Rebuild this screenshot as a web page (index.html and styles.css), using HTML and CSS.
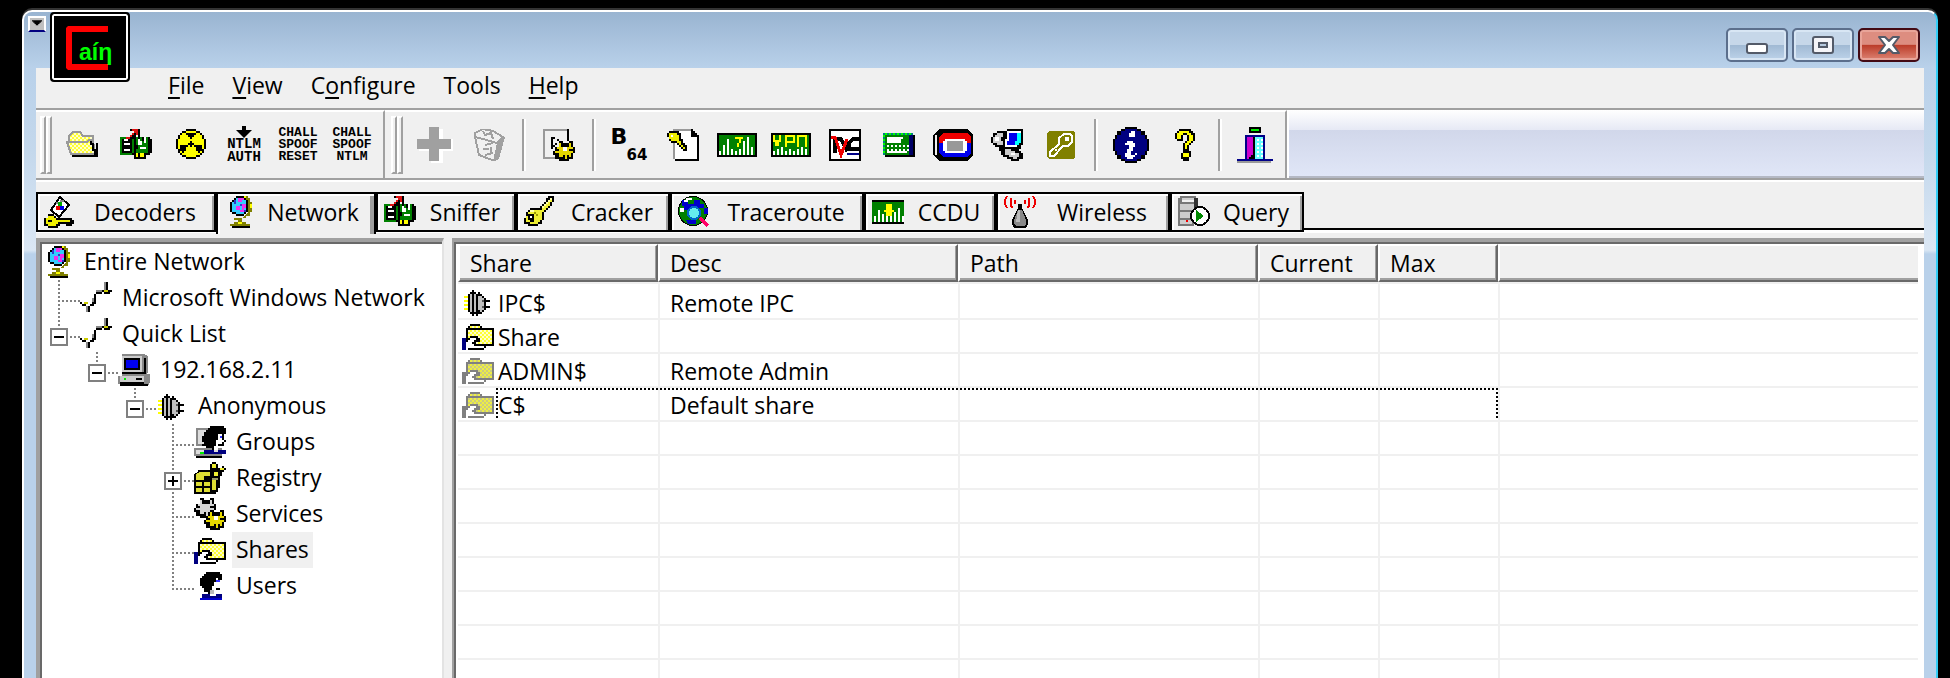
FILE: index.html
```html
<!DOCTYPE html>
<html lang="en">
<head>
<meta charset="utf-8">
<title>Cain</title>
<link rel="stylesheet" href="styles.css">
</head>
<body>
<svg class="sprite" width="0" height="0" aria-hidden="true">
  <defs>
    <pattern id="dither" width="2" height="2" patternUnits="userSpaceOnUse"><path fill="#ff3" d="M0 0h2v2H0z"/><path fill="#ffc" d="M0 0h1v1H0zM1 1h1v1H1z"/></pattern>
    <pattern id="dither-dim" width="2" height="2" patternUnits="userSpaceOnUse"><path fill="#ee4" d="M0 0h2v2H0z"/><path fill="#cccc80" d="M0 0h1v1H0zM1 1h1v1H1z"/></pattern>
    <pattern id="dither-cyan" width="2" height="2" patternUnits="userSpaceOnUse"><path fill="#6ff" d="M0 0h2v2H0z"/><path fill="#fff" d="M0 0h1v1H0z"/></pattern>
    <path id="gear-rim" d="M8 6h2v1h3V6h2v3h1v3h-1v3h-2v1H8v-1H6v-2H5v-2h1V9h2z"/>
    <path id="gear-teeth" d="M8 7h1v2h4V7h1v2h1v1h-2v1h2v1h-1v2h-1v-1h-1v2h-1v-2h-1v1H8v-2H6v-1h2v-1H7V9h1z"/>
  </defs>
  <symbol id="i-open" viewBox="0 0 16 16">
    <path fill="#000" d="M3 13h13v1H3zM15 7h1v7h-1z"/>
    <path fill="url(#dither)" stroke="#999" d="M1.500 6V3.500L3.500 1.500H7L8.500 3.500H13.500V6"/>
    <path fill="url(#dither)" stroke="#999" d="M.5 6.500H10.500L11.500 5.500H13.500L14.500 12.500H2.500z"/>
    <path fill="#000" d="M12 6h1v1h1v3h1v3h-1v-2h-1V8h-1z"/>
  </symbol>
  <symbol id="i-chip" viewBox="0 0 16 16">
    <path fill="#000" d="M1 4h14v1h1v7h-1v1h-2v2H7v-2H0V4z"/>
    <path fill="#008000" d="M0 4h1v9H0zM1 4h4v1H1zM1 12h5v1H1zM6 5h1v7H6zM8 4h6v8H8z"/>
    <path fill="#fff" d="M2 5h3v1H2zM2 7h3v1H2zM2 10h3v1H2zM9 5h1v1h1v2H9zM12 4h1v3h-1zM10 9h3v1h-3z"/>
    <path fill="#000" d="M11 4h1v2h-1zM8 8h1v2H8z"/>
    <path fill="#ff0" d="M8 12h1v2H8zM10 12h2v2h-2z"/>
    <path fill="#000" d="M5 0h5v5H9V3H8v1H7v1H6v1H4V4h1V3h1V2h1V1H5z"/>
    <path fill="#d11" d="M6 0h3v3H8V2H7v1H6v1H5v1H3V4h2V3h1V2h1V1H6z"/>
  </symbol>
  <symbol id="i-rad" viewBox="-1 0 16 16">
    <path fill="#000" d="M5 0h5v1h2v1h1v1h1v2h1v5h-1v2h-1v1h-1v1h-2v1H5v-1H3v-1H2v-1H1v-2H0V5h1V3h1V2h1V1h2z"/>
    <path fill="#ff0" d="M5 1h5v1h2v1h1v2h1v5h-1v2h-1v1h-2v1H5v-1H3v-1H2v-2H1V5h1V3h1V2h2z"/>
    <path fill="#000" d="M5 2h5v1H9v1H8v1H7V4H6V3H5zM7 6h1v1h1v1H8v1H7V8H6V7h1zM2 8h4v1H5v2H4v1H3v-1H2zM9 8h4v3h-1v1h-1v-1h-1V9H9z"/>
  </symbol>
  <symbol id="i-arrow" viewBox="0 0 8 6"><path d="M3 0h2v2h3L4 6 0 2h3z"/></symbol>
  <symbol id="i-plus" viewBox="0 0 18 18">
    <path fill="#fff" d="M7 1h6v5h5v6h-5v6H7v-6H1V7h6z"/><path fill="#a0a0a0" d="M6 0h5v6h6v5h-6v6H6v-6H0V6h6z"/>
  </symbol>
  <symbol id="i-bin" viewBox="0 0 16 16">
    <path fill="#a0a0a0" d="M16 4l-3 11-3 1 2-9z"/>
    <path fill="none" stroke="#a0a0a0" d="M1 2l4-2 5 1 5 3-3 3-7-2-4-1zM1 4l2 9 8 3 2-9M5 1l1 2 3-1 1 3M6 8l4-1M5 10h3M6 13l4-1M9 9v3"/>
  </symbol>
  <symbol id="i-conf" viewBox="0 0 16 16">
    <path fill="none" stroke="#999" d="M.5 15V.5H12M0 14.500h6"/>
    <path fill="#000" d="M12 0h1v6h-1zM4 4h2v1H5v3h1v1H5v1H4zM7 5h1v1H7zM6 7h1v1H6z"/>
    <use href="#gear-rim" fill="#000"/><use href="#gear-teeth" fill="#e6d800"/><path fill="#fff" d="M10 9h2v2h-2z"/>
  </symbol>
  <symbol id="i-keydoc" viewBox="0 0 16 16">
    <path fill="#fff" d="M4 1h8l3 3v11H4z"/><path fill="none" stroke="#999" d="M3.500 15V.5H12"/>
    <path fill="#000" d="M12 0h1v1h1v1h1v1h1v13H4v-1h11V4h-3z"/>
    <path fill="#000" d="M1 1h5v1h1v3h1v2h1v1h1v3H8v-1H7V9H6V8H5V7H2V6H1V4H0V2h1z"/>
    <path fill="#ee0" d="M1 2h4v1h1v3h1v2h1v1h1v1H8V9H7V8H6V7H5V6H2V5H1z"/><path fill="#fff" d="M2 3h1v1H2z"/>
  </symbol>
  <symbol id="i-sig7" viewBox="0 0 20 12">
    <path fill="#000" d="M0 0h20v12H0z"/><path fill="#008000" d="M1 1h18v10H1z"/>
    <path stroke="#fff" d="M1.500 9v2M3.500 6v5M5.500 3v8M7.500 8v3M9.500 9v2M11.500 8v3M13.500 4v7M15.500 2v9M17.500 7v4"/>
    <path fill="#ff0" d="M9 2h4v1h-1v2h-1v2h-1V5h1V3H9z"/>
  </symbol>
  <symbol id="i-sigvpn" viewBox="0 0 20 12">
    <path fill="#000" d="M0 0h20v12H0z"/><path fill="#008000" d="M1 1h18v10H1z"/>
    <path stroke="#fff" d="M1.500 9v2M3.500 8v3M5.500 7v4M7.500 9v2M9.500 8v3M11.500 9v2M13.500 8v3M15.500 7v4M17.500 8v3"/>
    <path fill="none" stroke="#ff0" d="M1.500 1v3h1v2h1v-2h1V1M7.500 7V1.500H11.500V4.500H8M13.500 7V1.500H17.500V7"/>
  </symbol>
  <symbol id="i-rdp" viewBox="0 0 16 16">
    <path fill="#fff" stroke="#000" d="M.5 .5h15v15H.5z"/>
    <path fill="none" stroke="#000" stroke-width="2" d="M3 12V5h3l3 6V6M15 5h-3l-2 2v3h5"/>
    <path fill="none" stroke="#e00" stroke-width="1.500" d="M1 4h2l3 9 3-8"/>
    <path fill="#008" d="M9 12h6v1H9z"/>
  </symbol>
  <symbol id="i-card" viewBox="0 0 16 16">
    <path fill="#008080" d="M0 2h15v11H0z"/><path fill="#008000" d="M1 3h13v10H1z"/>
    <path fill="#000" d="M15 3h1v11H1v-1h14z"/><path fill="#006" d="M13 3h2v10h-2z"/>
    <path fill="#fff" d="M2 4h8v1H9v2H2z"/><path stroke="#fff" stroke-dasharray="1 1" d="M2 8.500h11M2 10.500h11"/><path fill="#fff" d="M2 11h10v1H2z"/>
    <path stroke="#0f0" stroke-dasharray="1 1" d="M1 2.500h13M.5 3v10"/>
  </symbol>
  <symbol id="i-oval" viewBox="0 0 20 16">
    <path fill="#000" d="M3 0h14l3 3v10l-3 3H3l-3-3V3z"/><path fill="#eee" d="M1 3h1v10H1z"/>
    <path fill="#e00" d="M5 2h12l2 2v3H3V4z"/><path fill="#00e" d="M3 7h16v5l-2 2H5l-2-2z"/>
    <path fill="#fff" d="M6 5h10v1h1v5h-1v1H6v-1H5V6h1z"/><path fill="#999" d="M7 6h8v5H7z"/>
  </symbol>
  <symbol id="i-phone" viewBox="0 0 16 16">
    <path fill="#000" d="M3 1h5V0h8v8h-1v2h-1v1h1v1h1v3h-2v1h-4v-1H8v-1H6v-1H5v-2H4V9H2V8H1V7H0V4h1V2h2z"/>
    <path fill="#ccc" d="M3 2h3v2H5v2h1v2H3V7H1V4h1V3h1zM7 10h3v1h2v1h2v2h-1v1h-2v-1H9v-1H7z"/>
    <path fill="#fff" d="M2 4h2v2H2zM8 1h7v1H9v6h4v1H7V5h1zM10 12h2v1h-2z"/>
    <path fill="#00e" d="M9 2h4v6H8V6h1z"/><path fill="#0ff" d="M13 2h2v5h-1v1h-2V6h1z"/>
  </symbol>
  <symbol id="i-pass" viewBox="0 0 14 14">
    <path fill="#808000" d="M1 0h12l1 1v12l-1 1H1l-1-1V1z"/>
    <path fill="none" stroke="#fff" d="M8.500 1.500h3l1 1v3l-2 2H8L3.500 12.500h-2v-2L6 6.500v-3z"/><path fill="#fff" d="M9 3h2v2H9zM4 9h1v1H4z"/>
  </symbol>
  <symbol id="i-info" viewBox="0 0 18 18">
    <path fill="#000" d="M6 0h6v1h2v1h2v2h1v2h1v6h-1v2h-1v2h-2v1h-2v1H6v-1H4v-1H2v-2H1v-2H0V6h1V4h1V2h2V1h2z"/>
    <path fill="#000080" d="M6 1h6v1h2v2h2v2h1v6h-1v2h-2v2h-2v1H6v-1H4v-2H2v-2H1V6h1V4h2V2h2z"/>
    <path fill="#fff" d="M9 2h2v3H8V3h1zM6 8h1V7h3v1h1v2h-1v2H9v2h2v-1h1v1h-1v1h-1v1H7v-1H6v-2h1v-2h1V9H6z"/>
  </symbol>
  <symbol id="i-help" viewBox="0 0 10 16">
    <path fill="#000" d="M2 0h6v1h1v1h1v4H9v1H8v1H7v3h1v3H7v2H4v-1H3v-3h1V7h1V6h1V3H4v3H1V5H0V2h1V1h1z"/>
    <path fill="#ff0" d="M2 1h5v1h1v1h1v3H8v1H7v1H6v2H5V7h1V6h1V3H6V2H4v1H3v2H1V2h1zM4 12h3v2H4z"/>
  </symbol>
  <symbol id="i-exit" viewBox="0 0 18 18">
    <path fill="#000" d="M6 0h6v3H6z"/><path fill="#0e0" d="M7 1h4v1H7z"/>
    <path fill="#008" d="M4 4h10v12h4v1H0v-1h4z"/><path fill="#c0c" d="M5 5h3v9H7v1H6v1H5z"/><path fill="#000" d="M8 5h1v11H6v-1h1v-1h1z"/>
    <path fill="url(#dither-cyan)" d="M9 5h4v11H9z"/><path fill="#999" d="M0 17h17v1H0z"/>
  </symbol>
  <symbol id="i-decode" viewBox="0 0 16 16">
    <path fill="#fff" stroke="#000" d="M8 .5l4.500 4-5 6L3.500 7z"/><path fill="#888" d="M6 3h1v1H6zM8 2h2v1H8z"/><path fill="#0a0" d="M7 3h2v2H7z"/><path fill="#e00" d="M6 5h2v2H6z"/><path fill="#00e" d="M8 5h2v2H8z"/>
    <path fill="#000" d="M2 9h3v1h1v1h8v1h1v2h-1v1h-3v-1H8v1H7v1H2v-1H0v-4h2z"/>
    <path fill="#ee0" d="M2 10h3v1h1v1h7v1h-6v1H6v1H2v-1H1v-3h1z"/><path fill="#000" d="M2 12h2v1H2z"/>
  </symbol>
  <symbol id="i-globe" viewBox="-1 0 16 16">
    <path fill="#808000" d="M9 0h2v1h1v2h1v5h-1v2h-2v1H8v2h2v1h2v1H2v-1h2v-1h2v-1H4v-1h4l3-3V3z"/><path fill="#000" d="M3 15h9v1H3z"/>
    <path fill="#ff0" d="M9 0h1v1H9zM12 4h1v2h-1zM6 13h2v1H6z"/>
    <path fill="#000" d="M5 0h4v1h1v1h1v6h-1v1H9v1H5V9H3V8H2V3h1V2h1V1h1z"/>
    <path fill="#3cf" d="M5 1h4v1h1v6H9v1H5V8H3V3h1V2h1z"/>
    <path fill="#e3e" d="M6 1h3v1H8v1H6zM8 4h2v2H9v1H8zM5 5h2v2H5zM7 7h2v1H7z"/><path fill="#33c" d="M4 2h1v2H4zM7 4h1v1H7zM9 7h1v1H9z"/>
  </symbol>
  <symbol id="i-key" viewBox="0 0 16 16">
    <path fill="#000" d="M12 0h3v3h-1v2h-1v1h-1v1h-1v1h-1v4H9v2H7v1H2v-1H0v-3h1V8h1V7h1V6h5V5h1V4h1V3h1V1h1z"/>
    <path fill="#ee3" d="M13 1h1v2h-1v2h-1v1h-1v1h-1v1H9v4H8v1H7v1H3v-1H1v-3h1V8h1V7h6V5h1V4h1V3h1V2h1z"/>
    <path fill="#ffa" d="M13 1h1v1h-1v1h-1v1h-1v1h-1v1H9V5h1V4h1V3h1V2h1zM3 7h2v1H3z"/>
    <path fill="#000" d="M2 9h3v4H3v-1H2z"/><path fill="#fff" d="M3 10h1v1H3z"/><path fill="#990" d="M6 9h1v1H6zM5 8h1v1H5z"/>
  </symbol>
  <symbol id="i-trace" viewBox="0 0 16 16">
    <circle cx="7.500" cy="7.500" r="7.500" fill="#000"/><circle cx="7.500" cy="7.500" r="7" fill="#008000"/>
    <path fill="#00c" d="M2 2h3v2h3V2h3v2h2v2h-3v3H5V7H3V5H2zM4 12h5v2H5zM13 6h2v3h-2z"/><path fill="#fff" d="M4 1h3v1H5v1H3V2h1zM1 6h2v2H1z"/>
    <circle cx="8" cy="8.500" r="3" fill="#6ee" stroke="#06c"/><path stroke="#f06" stroke-width="2" d="M11 11l4 4"/>
  </symbol>
  <symbol id="i-ccdu" viewBox="0 0 16 12">
    <path fill="#000" d="M0 0h16v12H0z"/><path fill="#008000" d="M0 1h16v10H0z"/>
    <path stroke="#fff" d="M1.500 8v3M3.500 5v6M5.500 7v4M7.500 8v3M9.500 8v3M11.500 6v5M13.500 4v7M15.500 8v3"/><path fill="#ff0" d="M7 2h3v3h1v1h-1v2H7V6H6V5h1z"/>
  </symbol>
  <symbol id="i-wifi" viewBox="0 0 16 16">
    <path fill="none" stroke="#e00" d="M1.500 0L.5 2v2l1 2M3.500 1v4l1 1M12.500 1v4l-1 1M14.500 0l1 2v2l-1 2M5.500 2v2M10.500 2v2"/>
    <path fill="#000" d="M7 4h2v2l3 6v2l-1 2H5l-1-2v-2l3-6z"/><path fill="#888" d="M7 7h2l2 5v2l-1 1H6l-1-1v-2z"/><path fill="#bbb" d="M7 7h1v6H6z"/>
  </symbol>
  <symbol id="i-query" viewBox="0 0 16 16">
    <path fill="#777" d="M1 0h8v1H8v1H2v1h6v1H1v1h7v3H1v1h7v3H1v1h7v2H0V1h1z"/><path fill="#ccc" d="M2 1h6v1H2zM1 4h7v3H1zM1 8h6v3H1zM1 12h6v2H1z"/><path fill="#777" d="M1 7h7v1H1zM1 3h7v1H1zM1 11h6v1H1z"/><path fill="#333" d="M8 1h2v5H8z"/><path fill="#e00" d="M4 12h1v1H4z"/>
    <circle cx="11" cy="10" r="4.500" fill="#fff" stroke="#000"/><path fill="#080" d="M9 7l4 3-4 3z"/>
  </symbol>
  <symbol id="i-wire" viewBox="0 0 16 16">
    <path fill="#000" d="M0 10h1v1h2v1h2v-1h1v-1h1V6h1V5h3v1H8v5H7v1H5v3H4v-3H1v-1H0zM13 0h1v4h2v1h-1v1h-3V5h-1V4h2z"/>
    <path fill="#888" d="M12 0h1v4h-1zM8 4h3v1H8zM6 8h1v2H6zM3 12h1v3H3z"/><path fill="#cc0" d="M12 4h2v1h-2zM2 10h2v1H2z"/>
  </symbol>
  <symbol id="i-pc" viewBox="0 0 16 16">
    <path fill="#888" d="M2 0h11l2 1v8l-1 1h2v4l-1 2H1v-1H0v-4h2z"/><path fill="#ccc" d="M2 1h10v8H2zM1 11h12v3H1z"/><path fill="#000" d="M2 9h12v1H2zM13 2h1v7h-1zM1 14h12v1H1zM1 15h14v1H1zM9 12h3v1H9z"/>
    <path fill="#000" d="M3 2h8v6H3z"/><path fill="#00e" d="M4 3h6v4H4z"/><path fill="#0e0" d="M3 12h1v1H3z"/>
  </symbol>
  <symbol id="i-plug" viewBox="0 0 16 16">
    <path fill="#ff0" d="M1 5h2v1H1zM1 7h2v1H1zM1 9h2v1H1zM1 11h2v1H1z"/>
    <path fill="#000" d="M3 4h1V3h1V2h1v1h1v1h1V3h1v1h1v1h1v1h1v1h2v1h-2v2h2v1h-2v1h-1v1h-1v1H8v1H7v-1H6v1H5v-1H4v-1H3z"/>
    <path fill="#c0c0c0" d="M4 4h1v9H4zM6 4h1v9H6zM8 5h1v7H8zM9 5h1v8H9zM10 6h1v6h-1z"/><path fill="#555" d="M10 7h1v1h-1zM10 10h1v1h-1z"/>
  </symbol>
  <symbol id="i-groups" viewBox="0 0 16 16">
    <path fill="#888" d="M1 1h7v9H1zM0 11h14v5H1v-1H0z"/><path fill="#ddd" d="M2 2h5v7H2zM1 12h12v2H1z"/><path fill="#0e0" d="M3 13h2v1H3z"/><path fill="#000" d="M1 15h13v1H1z"/>
    <path fill="#000" d="M8 0h7v1h1v3h-1v3h1v1h-1v2h-3v2H9v-1H6v-1H4V9h1V8H4V5h1V3h1V2h1V1h1z"/><path fill="#fff" d="M12 4h2v3h1v1h-1v1h-2v3h-2v-2h1V7h1z"/><path fill="#33f" d="M13 5h1v1h-1z"/><path fill="#000080" d="M5 12h5v1h2v-1h4v2H5z"/>
  </symbol>
  <symbol id="i-registry" viewBox="0 0 16 16">
    <path fill="#000" d="M2 4h6V2h1v2h1v1h3v8h-1v2h-1v1H0V6l2-1z"/>
    <path fill="#dd3" d="M3 5h5v2H5v2H1V6zM1 10h3v2H1zM5 10h3v2H5zM1 13h3v2H1zM5 13h3v2H5zM9 9h2v5H9z"/><path fill="#996" d="M9 7h3v2H9z"/>
    <path fill="#000" d="M9 0h2v1h1v2h2V2h1v1h1v1h-1v1h-1v2h-2v1H9V4H8V1h1z"/><path fill="#ee3" d="M9 1h2v2H9zM13 3h2v1h-2zM10 5h2v2h-2z"/>
  </symbol>
  <symbol id="i-services" viewBox="0 0 16 16">
    <g transform="translate(-5 -6)"><use href="#gear-rim" fill="#000"/><use href="#gear-teeth" fill="#d4d4d4"/></g>
    <use href="#gear-rim" fill="#000"/><use href="#gear-teeth" fill="#e6d800"/><path fill="#fff" d="M10 9h2v2h-2z"/>
  </symbol>
  <symbol id="i-share" viewBox="0 0 16 16">
    <path fill="#000" d="M4 2h5v1h1v1h6v9H2V4h1V3h1z"/><path fill="url(#dither)" d="M4 3h5v1H4zM3 5h12v7H3z"/>
    <path fill="#000" d="M4 8h4v1h1v2H7v1h5v2h-1v1H3v-1H2v-4h1V9h1z"/><path fill="#fff" d="M3 10h1V9h3v1H6v1H5v1h1v1h5v1H3z"/><path fill="#fff" d="M2 11h1v3H2z"/><path fill="#000080" d="M0 9h2v6H0z"/>
  </symbol>
  <symbol id="i-share-dim" viewBox="0 0 16 16">
    <path fill="#808080" d="M4 2h5v1h1v1h6v9H2V4h1V3h1z"/><path fill="url(#dither-dim)" d="M4 3h5v1H4zM3 5h12v7H3z"/>
    <path fill="#808080" d="M4 8h4v1h1v2H7v1h5v2h-1v1H3v-1H2v-4h1V9h1z"/><path fill="#fff" d="M3 10h1V9h3v1H6v1H5v1h1v1h5v1H3z"/><path fill="#fff" d="M2 11h1v3H2z"/><path fill="#808080" d="M0 9h2v6H0z"/>
  </symbol>
  <symbol id="i-user" viewBox="0 0 16 16">
    <path fill="#000" d="M6 1h7v1h1v3h-1v2h1v1h-1v2h-2v2H7v-1H5V9H4V8H3V4h1V3h1V2h1z"/><path fill="#fff" d="M11 4h1v1h1v2h1v1h-1v1h-2v3H8v-1h1V8h1V6h1z"/><path fill="#bbb" d="M8 10h2v2H8z"/><path fill="#33f" d="M11 5h2v1h-2z"/><path fill="#000080" d="M4 12h4v1h3v-1h3v2H4z"/><path fill="#00c" d="M3 14h11v1H3z"/>
  </symbol>
</svg>

<div class="window">
  <header class="titlebar">
    <button class="sysmenu" type="button" aria-label="System menu"><svg viewBox="0 0 8 6"><path d="M0 0h8v1H7v1H6v1H5v1H3V3H2V2H1V1H0z"/></svg></button>
    <div class="caption-buttons">
      <button class="cap" type="button" aria-label="Minimize"><svg width="24" height="20" viewBox="0 0 24 20"><rect x="2" y="9" width="20" height="9" rx="2" fill="#fff" stroke="#535a68" stroke-width="2"/></svg></button>
      <button class="cap" type="button" aria-label="Restore"><svg width="24" height="20" viewBox="0 0 24 20"><rect x="2" y="2" width="20" height="16" rx="2" fill="#f4f4f8" stroke="#535a68" stroke-width="2"/><rect x="8" y="8" width="8" height="4" fill="#b6c9de" stroke="#535a68" stroke-width="2"/></svg></button>
      <button class="cap close" type="button" aria-label="Close"><svg width="24" height="20" viewBox="0 0 24 20"><path fill="#fff" stroke="#535a68" stroke-width="2" stroke-linejoin="round" d="M2 2h6l4 4 4-4h6l-6 8 6 8h-6l-4-4-4 4H2l6-8z"/></svg></button>
    </div>
  </header>
  <div class="logo"><svg viewBox="0 0 80 70"><path fill="#f00" d="M18 14h40v6H22v32h36v6H18l-2-2V16z"/><text x="29" y="48" class="logo-text">aíη</text></svg></div>

  <div class="client">
    <nav class="menubar">
      <button type="button"><u>F</u>ile</button>
      <button type="button"><u>V</u>iew</button>
      <button type="button">C<u>o</u>nfigure</button>
      <button type="button">Tools</button>
      <button type="button"><u>H</u>elp</button>
    </nav>

    <div class="rebar">
      <div class="band">
        <span class="grip"></span><span class="grip"></span>
        <button class="tool" type="button" aria-label="Open"><svg class="ico"><use href="#i-open"/></svg></button>
        <button class="tool" type="button" aria-label="Start sniffer"><svg class="ico"><use href="#i-chip"/></svg></button>
        <button class="tool" type="button" aria-label="Start APR"><svg class="ico"><use href="#i-rad"/></svg></button>
        <button class="tool lines wide" type="button"><svg class="arrow"><use href="#i-arrow"/></svg><span>NTLM</span><span>AUTH</span></button>
        <button class="tool lines" type="button"><span>CHALL</span><span>SPOOF</span><span>RESET</span></button>
        <button class="tool lines" type="button"><span>CHALL</span><span>SPOOF</span><span>NTLM</span></button>
      </div>
      <div class="band">
        <span class="grip"></span><span class="grip"></span>
        <button class="tool" type="button" aria-label="Add"><svg class="ico big"><use href="#i-plus"/></svg></button>
        <button class="tool" type="button" aria-label="Remove"><svg class="ico"><use href="#i-bin"/></svg></button>
        <span class="sep"></span>
        <button class="tool" type="button" aria-label="Configure"><svg class="ico"><use href="#i-conf"/></svg></button>
        <span class="sep"></span>
        <button class="tool b64" type="button"><span class="b">B</span><span class="n">64</span></button>
        <button class="tool" type="button" aria-label="Password decoder"><svg class="ico"><use href="#i-keydoc"/></svg></button>
        <button class="tool" type="button" aria-label="Type 7 decoder"><svg class="ico sig"><use href="#i-sig7"/></svg></button>
        <button class="tool" type="button" aria-label="VPN decoder"><svg class="ico sig"><use href="#i-sigvpn"/></svg></button>
        <button class="tool" type="button" aria-label="VNC decoder"><svg class="ico"><use href="#i-rdp"/></svg></button>
        <button class="tool" type="button" aria-label="Token calculator"><svg class="ico"><use href="#i-card"/></svg></button>
        <button class="tool" type="button" aria-label="SecurID"><svg class="ico oval"><use href="#i-oval"/></svg></button>
        <button class="tool" type="button" aria-label="Remote desktop"><svg class="ico"><use href="#i-phone"/></svg></button>
        <button class="tool" type="button" aria-label="Syskey"><svg class="ico small"><use href="#i-pass"/></svg></button>
        <span class="sep"></span>
        <button class="tool" type="button" aria-label="About"><svg class="ico big"><use href="#i-info"/></svg></button>
        <button class="tool" type="button" aria-label="Help"><svg class="ico"><use href="#i-help"/></svg></button>
        <span class="sep"></span>
        <button class="tool" type="button" aria-label="Exit"><svg class="ico big"><use href="#i-exit"/></svg></button>
      </div>
    </div>

    <div class="tabs" role="tablist">
      <button class="tab t180" role="tab" type="button"><svg class="ico"><use href="#i-decode"/></svg><span>Decoders</span></button>
      <button class="tab t160 active" role="tab" type="button" aria-selected="true"><svg class="ico"><use href="#i-globe"/></svg><span>Network</span></button>
      <button class="tab t140" role="tab" type="button"><svg class="ico"><use href="#i-chip"/></svg><span>Sniffer</span></button>
      <button class="tab t154" role="tab" type="button"><svg class="ico"><use href="#i-key"/></svg><span>Cracker</span></button>
      <button class="tab t194" role="tab" type="button"><svg class="ico"><use href="#i-trace"/></svg><span>Traceroute</span></button>
      <button class="tab t132" role="tab" type="button"><svg class="ico"><use href="#i-ccdu"/></svg><span>CCDU</span></button>
      <button class="tab t174" role="tab" type="button"><svg class="ico"><use href="#i-wifi"/></svg><span>Wireless</span></button>
      <button class="tab t134" role="tab" type="button"><svg class="ico"><use href="#i-query"/></svg><span>Query</span></button>
    </div>

    <main class="panes">
      <section class="tree-pane">
        <ul class="tree">
          <li><div class="node root"><svg class="ico"><use href="#i-globe"/></svg><span class="label">Entire Network</span></div>
            <ul>
              <li><div class="node"><span class="gutter"></span><svg class="ico"><use href="#i-wire"/></svg><span class="label">Microsoft Windows Network</span></div></li>
              <li><div class="node"><span class="gutter"><button class="exp" type="button" aria-label="Collapse"></button></span><svg class="ico"><use href="#i-wire"/></svg><span class="label">Quick List</span></div>
                <ul>
                  <li><div class="node"><span class="gutter"><button class="exp" type="button" aria-label="Collapse"></button></span><svg class="ico"><use href="#i-pc"/></svg><span class="label">192.168.2.11</span></div>
                    <ul>
                      <li><div class="node"><span class="gutter"><button class="exp" type="button" aria-label="Collapse"></button></span><svg class="ico"><use href="#i-plug"/></svg><span class="label">Anonymous</span></div>
                        <ul>
                          <li><div class="node"><span class="gutter"></span><svg class="ico"><use href="#i-groups"/></svg><span class="label">Groups</span></div></li>
                          <li><div class="node"><span class="gutter"><button class="exp plus" type="button" aria-label="Expand"></button></span><svg class="ico"><use href="#i-registry"/></svg><span class="label">Registry</span></div></li>
                          <li><div class="node"><span class="gutter"></span><svg class="ico"><use href="#i-services"/></svg><span class="label">Services</span></div></li>
                          <li><div class="node"><span class="gutter"></span><svg class="ico"><use href="#i-share"/></svg><span class="label selected">Shares</span></div></li>
                          <li><div class="node"><span class="gutter"></span><svg class="ico"><use href="#i-user"/></svg><span class="label">Users</span></div></li>
                        </ul>
                      </li>
                    </ul>
                  </li>
                </ul>
              </li>
            </ul>
          </li>
        </ul>
      </section>

      <section class="list-pane">
        <table>
          <colgroup><col class="c200"><col class="c300"><col class="c300"><col class="c120"><col class="c120"><col></colgroup>
          <thead><tr><th>Share</th><th>Desc</th><th>Path</th><th>Current</th><th>Max</th><th></th></tr></thead>
          <tbody>
            <tr><td><div class="name"><svg class="ico"><use href="#i-plug"/></svg><span>IPC$</span></div></td><td>Remote IPC</td><td></td><td></td><td></td><td></td></tr>
            <tr><td><div class="name"><svg class="ico"><use href="#i-share"/></svg><span>Share</span></div></td><td></td><td></td><td></td><td></td><td></td></tr>
            <tr><td><div class="name"><svg class="ico"><use href="#i-share-dim"/></svg><span>ADMIN$</span></div></td><td>Remote Admin</td><td></td><td></td><td></td><td></td></tr>
            <tr class="focused"><td><div class="name"><svg class="ico"><use href="#i-share-dim"/></svg><span>C$</span></div></td><td>Default share</td><td></td><td></td><td></td><td></td></tr>
            <tr><td></td><td></td><td></td><td></td><td></td><td></td></tr>
            <tr><td></td><td></td><td></td><td></td><td></td><td></td></tr>
            <tr><td></td><td></td><td></td><td></td><td></td><td></td></tr>
            <tr><td></td><td></td><td></td><td></td><td></td><td></td></tr>
            <tr><td></td><td></td><td></td><td></td><td></td><td></td></tr>
            <tr><td></td><td></td><td></td><td></td><td></td><td></td></tr>
            <tr><td></td><td></td><td></td><td></td><td></td><td></td></tr>
            <tr><td></td><td></td><td></td><td></td><td></td><td></td></tr>
          </tbody>
        </table>
      </section>
    </main>
  </div>
</div>
</body>
</html>
```
FILE: styles.css
```css
* { box-sizing: border-box; }

html, body { height: 100%; }

body {
  margin: 0;
  background: #000;
  color: #000;
  font: 23px/32px "Open Sans", "Noto Sans", sans-serif;
  overflow: hidden;
  display: flex;
}

button {
  font: inherit;
  color: inherit;
  background: none;
  border: 0;
  padding: 0;
  margin: 0;
}

.sprite { position: absolute; }

.ico {
  width: 32px;
  height: 32px;
  flex: none;
  display: block;
  shape-rendering: crispEdges;
}
.ico.big { width: 36px; height: 36px; }
.ico.small { width: 28px; height: 28px; }
.ico.sig { width: 40px; height: 24px; }
.ico.oval { width: 40px; height: 32px; }

/* Window frame */
.window {
  position: relative;
  flex: 1;
  min-width: 0;
  display: flex;
  flex-direction: column;
  margin: 10px 12px 0 22px;
  padding: 0 12px;
  border: 2px solid #fff;
  border-right-color: #35cdf5;
  border-bottom: 0;
  border-radius: 10px 10px 0 0;
  box-shadow: 0 -2px 0 #333;
  background: linear-gradient(#99b4d1, #b9d1ea 56px, #c4d8ec 140px, #dbe7f4 238px, #b9d1ea 242px);
}

.titlebar {
  height: 56px;
  display: flex;
  justify-content: space-between;
  align-items: flex-start;
  margin: 0 -8px;
}
.sysmenu {
  width: 18px;
  height: 16px;
  margin-top: 4px;
  background: #c0c0c0;
  border: 2px solid #fff;
  border-bottom-color: #000080;
  display: grid;
  place-items: center;
}
.sysmenu svg { width: 10px; height: 8px; display: block; }

.caption-buttons { display: flex; gap: 4px; padding: 16px 12px 0 0; }
.cap {
  width: 62px;
  height: 34px;
  display: grid;
  place-items: center;
  border: 2px solid #5c6f8c;
  border-radius: 5px;
  box-shadow: inset 0 0 0 2px #d8e6f4;
  background: linear-gradient(#c6d7e9 50%, #a0b9d3 50%, #bdd3ea);
}
.cap.close {
  border-color: #430a14;
  box-shadow: inset 0 0 0 2px #e8a499;
  background: linear-gradient(#dd8d80 48%, #bb3b28 50%, #dd8474);
}

.logo {
  position: absolute;
  left: 26px;
  top: 0;
  width: 80px;
  height: 70px;
  background: #000;
  border: 2px solid #000;
  border-radius: 4px;
  box-shadow: inset 0 0 0 2px #fff;
}
.logo svg { display: block; width: 80px; height: 70px; margin: -2px; }
.logo-text { font: bold 23px "Liberation Sans", sans-serif; fill: #0f0; }

/* Client area */
.client {
  flex: 1;
  display: flex;
  flex-direction: column;
  min-height: 0;
  background: #f0f0f0;
}
.menubar {
  height: 40px;
  display: flex;
  padding: 0 0 6px 118px;
  flex: none;
}
.menubar button { padding: 0 14px; line-height: 32px; }
.menubar u { text-underline-offset: 3px; text-decoration-thickness: 2px; }

.rebar {
  flex: none;
  display: flex;
  height: 72px;
  border-top: 2px solid #a0a0a0;
  border-bottom: 2px solid #a0a0a0;
  background: linear-gradient(#fff, #e6e9f5 20px, #d1d7ea 20px, #e0e6f7 66px, #b4b8c4 66px);
}
.band {
  display: flex;
  align-items: center;
  background: #f0f0f0;
  border-top: 2px solid #fff;
  border-right: 2px solid #a0a0a0;
  box-shadow: 2px 0 0 #fff;
  padding: 0 4px;
}
.band + .band { padding-left: 6px; padding-right: 3px; }
.grip {
  width: 6px;
  height: 58px;
  border: 2px solid #fff;
  border-right-color: #a0a0a0;
  border-bottom-color: #a0a0a0;
}
.grip + .grip { margin-right: 3px; }
.band + .band .grip + .grip { margin-right: 5px; }
.tool { width: 54px; height: 48px; display: grid; place-items: center; }
.sep {
  width: 4px;
  height: 52px;
  margin: 0 6px;
  border-left: 2px solid #a0a0a0;
  border-right: 2px solid #fff;
}
.lines {
  align-content: center;
  font: bold 13px/12px "Liberation Mono", monospace;
}
.lines.wide { font-size: 14px; line-height: 13px; }
.arrow { width: 16px; height: 12px; display: block; }
.b64 {
  grid-template-columns: 16px 20px;
  grid-template-rows: 20px 16px;
  place-content: center;
  font: bold 17px/16px "DejaVu Sans", sans-serif;
}
.b64 .b { font-size: 22px; }
.b64 .n { grid-area: 2 / 2; font-size: 15px; }

/* Tab strip */
.tabs {
  flex: none;
  display: flex;
  height: 54px;
  padding-top: 10px;
  border-top: 2px solid #fff;
  background: linear-gradient(#000, #000) 0 46px / 100% 2px no-repeat, linear-gradient(#fff, #fff) 0 48px / 100% 3px no-repeat;
}
.tab {
  height: 40px;
  display: flex;
  align-items: flex-start;
  padding: 2px 0 0 6px;
  border: 2px solid #000;
  background: #f0f0f0;
  box-shadow: inset 2px 2px 0 #fff, inset -2px 0 0 #a0a0a0;
}
.tab span { flex: 1; text-align: center; line-height: 32px; }
.tab.active {
  height: 42px;
  border-bottom: 0;
  padding-right: 4px;
  box-shadow: inset 2px 2px 0 #fff, inset -4px 0 0 #a0a0a0;
}
.t180 { width: 180px; }
.t160 { width: 160px; }
.t140 { width: 140px; }
.t154 { width: 154px; }
.t194 { width: 194px; }
.t132 { width: 132px; }
.t174 { width: 174px; }
.t134 { width: 134px; }

/* Panes */
.panes {
  flex: 1;
  min-height: 0;
  display: flex;
  margin-top: 4px;
  gap: 8px;
}
.tree-pane, .list-pane {
  background: #fff;
  border: 0 solid;
  overflow: hidden;
}
.tree-pane {
  width: 408px;
  border-top: 4px solid #a0a0a0;
  border-left: 4px solid #a0a0a0;
  border-right: 2px solid #e3e3e3;
  box-shadow: inset 2px 2px 0 #696969;
  padding: 2px 0 0 2px;
}
.list-pane {
  flex: 1;
  min-width: 0;
  border-top: 4px solid #a0a0a0;
  border-left: 2px solid #a0a0a0;
  box-shadow: inset 2px 2px 0 #696969;
  padding: 2px 6px 0 4px;
}

/* Tree */
.tree, .tree ul { list-style: none; margin: 0; padding: 0; }
.tree ul ul { padding-left: 38px; }
.tree ul li {
  background: repeating-linear-gradient(#808080 0 2px, transparent 2px 4px) 16px 0 / 2px 100% no-repeat;
}
.tree ul li:last-child { background-size: 2px 20px; }
.tree ul .node {
  background: repeating-linear-gradient(90deg, #808080 0 2px, transparent 2px 4px) 16px 20px / 22px 2px no-repeat;
}
.node { display: flex; align-items: center; height: 36px; }
.gutter { width: 38px; height: 36px; padding: 12px 0 0 8px; flex: none; }
.exp {
  display: block;
  width: 18px;
  height: 18px;
  border: 2px solid #808080;
  background: linear-gradient(#000, #000) 2px 6px / 10px 2px no-repeat, #fff;
}
.exp.plus {
  background: linear-gradient(#000, #000) 2px 6px / 10px 2px no-repeat, linear-gradient(#000, #000) 6px 2px / 2px 10px no-repeat, #fff;
}
.label { margin-left: 6px; padding: 0 4px 2px; line-height: 34px; white-space: nowrap; }
.label.selected { background: #f0f0f0; }

/* List */
table { width: 100%; table-layout: fixed; border-collapse: separate; border-spacing: 0; }
.c200 { width: 200px; }
.c300 { width: 300px; }
.c120 { width: 120px; }
th {
  height: 38px;
  padding: 0 0 0 10px;
  text-align: left;
  font-weight: normal;
  line-height: 32px;
  background: #f0f0f0;
  border: 2px solid #fff;
  border-right-color: #696969;
  border-bottom-color: #696969;
  box-shadow: inset -1px -2px 0 #a0a0a0;
}
th:last-child { border-right: 0; box-shadow: inset 0 -2px 0 #a0a0a0; }
td { height: 34px; padding: 0; line-height: 32px; border-bottom: 2px solid #f0f0f0; }
td + td { border-left: 2px solid #f0f0f0; padding: 2px 0 0 10px; line-height: 30px; }
tbody tr:first-child td { border-top: 2px solid #f0f0f0; padding-top: 2px; height: 38px; }
tbody tr:first-child td + td { padding-top: 4px; }
.name { display: flex; align-items: center; height: 32px; padding-left: 4px; gap: 2px; }
.name span { flex: 1; padding: 2px 0 0 2px; line-height: 30px; }
.focused .name span {
  background:
    repeating-linear-gradient(90deg, #000 0 2px, transparent 2px 4px) 0 0 / 100% 2px no-repeat,
    repeating-linear-gradient(#000 0 2px, transparent 2px 4px) 0 0 / 2px 100% no-repeat;
}
.focused td + td {
  background: repeating-linear-gradient(90deg, #000 0 2px, transparent 2px 4px) 0 0 / 100% 2px no-repeat;
}
.focused td:nth-child(5) {
  background:
    repeating-linear-gradient(90deg, #000 0 2px, transparent 2px 4px) 0 0 / 100% 2px no-repeat,
    repeating-linear-gradient(#000 0 2px, transparent 2px 4px) 100% 0 / 2px 100% no-repeat;
}
.focused td:last-child { background: none; }
```
